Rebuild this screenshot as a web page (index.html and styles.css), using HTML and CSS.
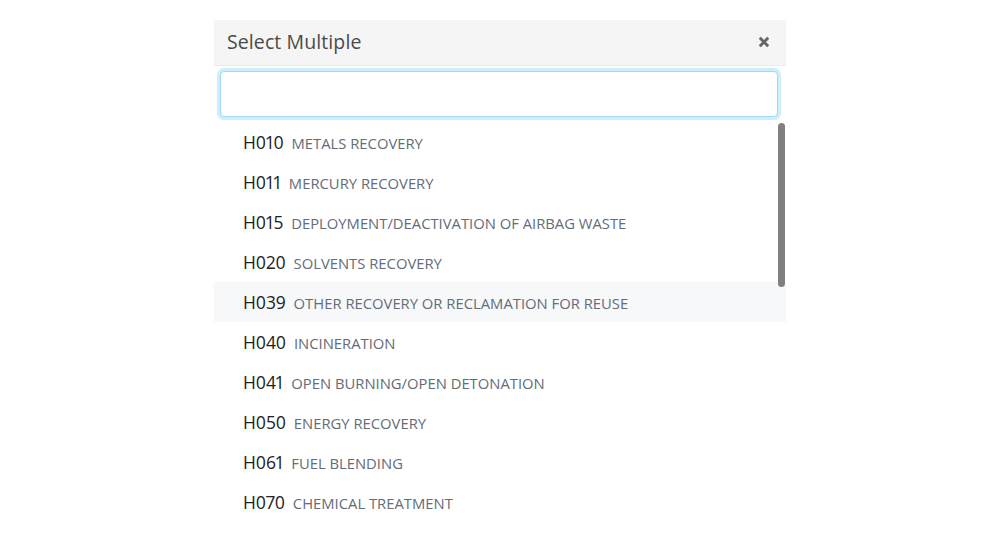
FILE: index.html
```html
<!DOCTYPE html>
<html>
<head>
<meta charset="utf-8">
<link rel="stylesheet" href="styles.css">
</head>
<body>
<div class="panel">
  <div class="header">
    <span class="title">Select Multiple</span>
    <svg class="close" width="12" height="12" viewBox="0 0 12 12"><path d="M1.8 1.8 L10.2 10.2 M10.2 1.8 L1.8 10.2" stroke="#666" stroke-width="3" stroke-linecap="butt"/></svg>
  </div>
  <div class="search"><div class="input"></div></div>
  <div class="list">
    <div class="row"><span class="code">H010</span><span class="desc">METALS RECOVERY</span></div>
    <div class="row"><span class="code">H011</span><span class="desc">MERCURY RECOVERY</span></div>
    <div class="row"><span class="code">H015</span><span class="desc">DEPLOYMENT/DEACTIVATION OF AIRBAG WASTE</span></div>
    <div class="row"><span class="code">H020</span><span class="desc">SOLVENTS RECOVERY</span></div>
    <div class="row hover"><span class="code">H039</span><span class="desc">OTHER RECOVERY OR RECLAMATION FOR REUSE</span></div>
    <div class="row"><span class="code">H040</span><span class="desc">INCINERATION</span></div>
    <div class="row"><span class="code">H041</span><span class="desc">OPEN BURNING/OPEN DETONATION</span></div>
    <div class="row"><span class="code">H050</span><span class="desc">ENERGY RECOVERY</span></div>
    <div class="row"><span class="code">H061</span><span class="desc">FUEL BLENDING</span></div>
    <div class="row"><span class="code">H070</span><span class="desc">CHEMICAL TREATMENT</span></div>
    <div class="thumb"></div>
  </div>
</div>
</body>
</html>
```
FILE: styles.css
```css
html, body { margin: 0; padding: 0; background: #fff; }
body { font-family: "Open Sans", "Noto Sans", sans-serif; }
.panel {
  width: 572px;
  margin: 20px 0 0 214px;
  background: #fff;
}
.header {
  height: 45px;
  border-bottom: 1px solid #ebebeb;
  background: #f5f5f5;
  display: flex;
  align-items: center;
  justify-content: space-between;
  padding: 0 16px 0 13px;
}
.title {
  font-size: 19.5px;
  font-weight: 400;
  color: #4a4a4a;
  letter-spacing: 0.1px;
  margin-top: -3px;
}
.close { display: block; margin-top: -1px; }
.search { padding: 5px 8px 5px 6px; }
.input {
  height: 44px;
  border: 1px solid #9fd9f6;
  border-radius: 4px;
  box-shadow: 0 0 0 3px #cdeefd;
  background: #fff;
}
.list {
  position: relative;
  height: 408px;
  overflow: hidden;
}
.row {
  height: 40px;
  display: flex;
  align-items: center;
  padding-left: 29px;
}
.row.hover { background: #f7f8fa; }
.code {
  font-size: 17.5px;
  color: #222;
  margin-right: 8px;
  letter-spacing: -0.1px;
  font-variant-numeric: proportional-nums;
}
.desc {
  font-size: 14.8px;
  color: #646c78;
  padding-top: 1px;
}
.thumb {
  position: absolute;
  right: 1px;
  top: 1px;
  width: 7px;
  height: 164px;
  border-radius: 4px;
  background: #808080;
}
```
